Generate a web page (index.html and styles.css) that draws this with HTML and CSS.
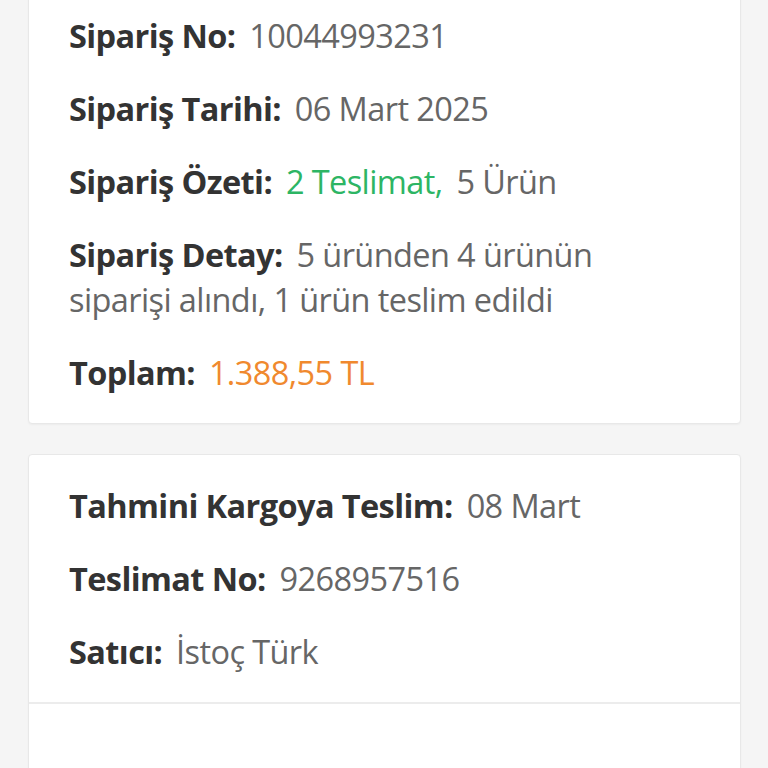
FILE: index.html
```html
<!DOCTYPE html>
<html lang="tr">
<head>
  <meta charset="UTF-8" />
  <meta name="viewport" content="width=device-width, initial-scale=1.0"/>
  <title>Sipariş Detayı</title>
  <link rel="stylesheet" href="styles.css">
</head>
<body>

  <div class="page">

    <!-- Order summary card -->
    <section class="card">
      <div class="section">
        <p class="row"><span class="label">Sipariş No:</span> <span class="value">10044993231</span></p>
        <p class="row"><span class="label">Sipariş Tarihi:</span> <span class="value">06 Mart 2025</span></p>
        <p class="row"><span class="label">Sipariş Özeti:</span> <span class="value green">2 Teslimat,</span> <span class="value">5 Ürün</span></p>
        <p class="row"><span class="label">Sipariş Detay:</span> <span class="value">5 üründen 4 ürünün siparişi alındı, 1 ürün teslim edildi</span></p>
        <p class="row"><span class="label">Toplam:</span> <span class="value orange">1.388,55 TL</span></p>
      </div>
    </section>

    <!-- Delivery card -->
    <section class="card">
      <div class="section">
        <p class="row"><span class="label">Tahmini Kargoya Teslim:</span> <span class="value">08 Mart</span></p>
        <p class="row"><span class="label">Teslimat No:</span> <span class="value">9268957516</span></p>
        <p class="row"><span class="label">Satıcı:</span> <span class="value">İstoç Türk</span></p>
      </div>
      <div class="section empty"></div>
    </section>

  </div>

</body>
</html>
```

FILE: styles.css
```css
body {
  margin: 0;
  padding: 0;
  background-color: #f5f5f5;
  font-family: 'Open Sans', 'Noto Sans', sans-serif;
  color: #333;
  overflow: hidden;
}

.page {
  display: flex;
  flex-direction: column;
  gap: 30px;
  padding: 0 27px 0 28px;
  margin-top: -16px;
}

.card {
  background: white;
  border: 1px solid #e8e8e8;
  border-radius: 4px;
  box-shadow: 0 1px 2px rgba(0,0,0,0.04);
}

.section {
  display: flex;
  flex-direction: column;
  gap: 28px;
  padding: 28px 60px 28px 40px;
}

.section + .section {
  border-top: 2px solid #ececec;
}

.section.empty {
  height: 120px;
  padding: 0;
}

.row {
  margin: 0;
  font-size: 32.5px;
  line-height: 45px;
  letter-spacing: -0.6px;
}

.label {
  font-weight: 700;
  color: #333;
  margin-right: 6px;
}

.value {
  color: #666;
}

.green {
  color: #2db564;
  margin-right: 6px;
}

.orange {
  color: #f0892e;
}
```
